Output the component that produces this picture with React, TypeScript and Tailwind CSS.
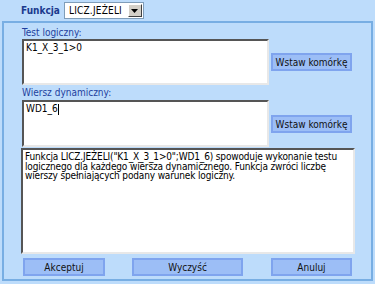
export default function App() {
  return (
    <div className="w-[375px] h-[284px] bg-[#bddcfb] font-['DejaVu_Sans_Condensed','DejaVu_Sans',sans-serif] text-[10px] text-black overflow-hidden">
      {/* header row */}
      <div className="h-[21px] flex items-center pl-[21px] gap-[4px]">
        <span className="text-[10px] font-bold text-[#1b3a8e]">Funkcja</span>
        <div className="w-[80px] h-[17px] bg-white border border-[#7f9db9] flex items-center justify-between pl-[4px] pr-px">
          <span className="tracking-[0.2px]">LICZ.JEŻELI</span>
          <div className="w-[14px] h-[13px] bg-[#d4d0c8] border border-t-white border-l-white border-r-[#404040] border-b-[#404040] flex items-center justify-center">
            <svg width="7" height="4" viewBox="0 0 7 4">
              <path d="M0 0h7L3.5 4z" fill="#000" />
            </svg>
          </div>
        </div>
      </div>

      {/* panel */}
      <div className="mx-[2px] h-[260px] border-2 border-[#78aee3] pl-[18px] pt-[5px] flex flex-col">
        <div className="text-[#1f3f9e] h-[10px] leading-[10px]">Test logiczny:</div>
        <div className="flex items-center mt-[1px] h-[46px]">
          <div className="w-[247px] h-[46px] bg-white border-2 border-t-[#555] border-l-[#555] border-r-[#e8e8e8] border-b-[#e8e8e8] px-[2px] py-px leading-[12px]">
            K1_X_3_1&gt;0
          </div>
          <button className="ml-[2px] w-[81px] h-[18px] bg-[#9cbef6] border-2 border-[#7fa4ee] text-[10px] text-[#111] whitespace-nowrap">
            Wstaw komórkę
          </button>
        </div>
        <div className="text-[#1f3f9e] h-[10px] leading-[10px] mt-[3px]">Wiersz dynamiczny:</div>
        <div className="flex items-center mt-[2px] h-[47px]">
          <div className="w-[247px] h-[47px] bg-white border-2 border-t-[#555] border-l-[#555] border-r-[#e8e8e8] border-b-[#e8e8e8] px-[2px] py-px leading-[12px]">
            WD1_6<span className="inline-block w-px h-[11px] bg-black align-middle" />
          </div>
          <button className="ml-[2px] w-[81px] h-[18px] bg-[#9cbef6] border-2 border-[#7fa4ee] text-[10px] text-[#111] whitespace-nowrap">
            Wstaw komórkę
          </button>
        </div>
        <div className="-ml-[1px] mt-[1px] w-[334px] h-[106px] bg-white border-2 border-t-[#555] border-l-[#555] border-r-[#e8e8e8] border-b-[#e8e8e8] px-[2px] pt-[2px] leading-[9.5px] tracking-[-0.15px]">
          Funkcja LICZ.JEŻELI("K1_X_3_1&gt;0";WD1_6) spowoduje wykonanie testu logicznego dla każdego wiersza dynamicznego. Funkcja zwróci liczbę wierszy spełniających podany warunek logiczny.
        </div>
        <div className="flex mt-[4px] h-[18px]">
          <button className="ml-[1px] w-[82px] h-[18px] bg-[#9cbef6] border-2 border-[#7fa4ee] text-[10px] text-[#111]">
            Akceptuj
          </button>
          <button className="ml-[27px] w-[111px] h-[18px] bg-[#9cbef6] border-2 border-[#7fa4ee] text-[10px] text-[#111]">
            Wyczyść
          </button>
          <button className="ml-[28px] w-[81px] h-[18px] bg-[#9cbef6] border-2 border-[#7fa4ee] text-[10px] text-[#111]">
            Anuluj
          </button>
        </div>
      </div>
    </div>
  );
}
